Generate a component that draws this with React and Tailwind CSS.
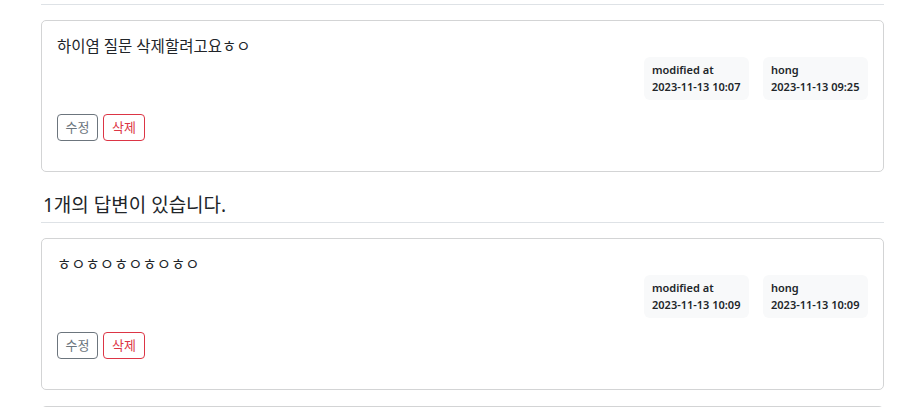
import React from 'react';

const FONT = { fontFamily: '"Noto Sans", "Noto Sans CJK KR", sans-serif' };

function Meta({ label, date }) {
    return (
        <div className="bg-[#f8f9fa] rounded-[6px] px-[8px] pt-[7px] pb-[7px] text-[11px] font-semibold leading-[12px] text-[#212529] w-[105px]">
            <div className="mb-[5px]">{label}</div>
            <div>{date}</div>
        </div>
    );
}

function PostCard({ content, modified, author, created }) {
    return (
        <div className="border border-[#d3d4d5] rounded-[5px] pt-[15px] pb-[30px] px-[15px]">
            <div className="h-[21px] leading-[21px] text-[15.5px] text-[#212529] whitespace-pre-line">{content}</div>
            <div className="flex justify-end gap-[14px]">
                <Meta label="modified at" date={modified} />
                <Meta label={author} date={created} />
            </div>
            <div className="flex gap-[5px] mt-[14px]">
                <button className="w-[41px] h-[27px] text-[13px] leading-[25px] border border-[#6c757d] text-[#6c757d] rounded-[4px]">수정</button>
                <button className="w-[42px] h-[27px] text-[13px] leading-[25px] border border-[#dc3545] text-[#dc3545] rounded-[4px]">삭제</button>
            </div>
        </div>
    );
}

export default function App() {
    return (
        <div className="bg-white min-h-[407px] overflow-hidden" style={FONT}>
            <div className="ml-[41px] w-[843px]">
                {/* top divider */}
                <div className="h-[5px] border-b border-[#dee2e6]"></div>

                {/* question */}
                <div className="mt-[15px]">
                    <PostCard
                        content="하이염 질문 삭제할려고요ㅎㅇ"
                        modified="2023-11-13 10:07"
                        author="hong"
                        created="2023-11-13 09:25"
                    />
                </div>

                {/* answer count */}
                <h5 className="mt-[18px] pb-[2px] text-[19px] leading-[30px] text-[#212529] border-b border-[#dee2e6] pl-[2px]">
                    1개의 답변이 있습니다.
                </h5>

                {/* answer */}
                <div className="mt-[15px]">
                    <PostCard
                        content="ㅎㅇㅎㅇㅎㅇㅎㅇㅎㅇ"
                        modified="2023-11-13 10:09"
                        author="hong"
                        created="2023-11-13 10:09"
                    />
                </div>

                {/* next card (cut off) */}
                <div className="mt-[16px] h-[40px] border border-[#d3d4d5] rounded-[5px]"></div>
            </div>
        </div>
    );
}
